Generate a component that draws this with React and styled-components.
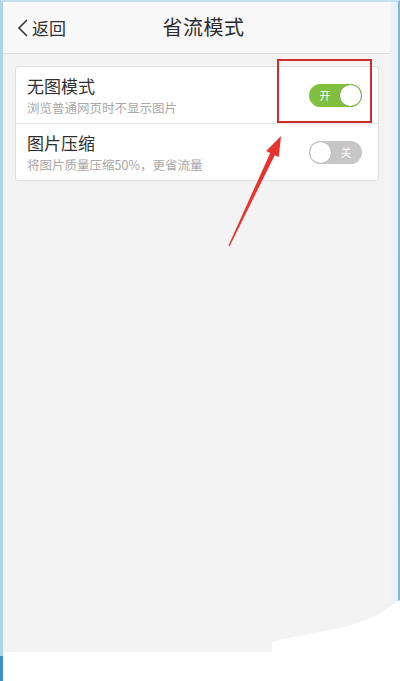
import React from "react";
import styled, { createGlobalStyle } from "styled-components";

const Global = createGlobalStyle`
  html, body { margin: 0; padding: 0; background: #ffffff; }
  body { font-family: "Noto Sans CJK SC", "Noto Sans", sans-serif; }
  * { box-sizing: border-box; }
`;

const Frame = styled.div`
  position: relative;
  width: 400px;
  height: 681px;
  display: flex;
  flex-direction: column;
  background: #ffffff;
  overflow: hidden;
`;

const Screen = styled.div`
  height: 652px;
  display: flex;
  border-top: 2px solid #c3e2f0;
  border-left: 3px solid #acd5e8;
  border-right: 2px solid #86b4ca;
`;

const Panel = styled.div`
  flex: 1;
  display: flex;
  flex-direction: column;
  background: #f3f3f3;
`;

const EdgeBand = styled.div`
  width: 8px;
  background: linear-gradient(90deg, #f1f3f4 0%, #e6f1f8 60%, #e2f0fa 100%);
`;

const Header = styled.header`
  height: 52px;
  display: grid;
  grid-template-columns: 1fr auto 1fr;
  align-items: center;
  padding: 0 0 0 14px;
  background: #f8f8f8;
  border-bottom: 1px solid #dcdcdc;
`;

const Back = styled.div`
  display: flex;
  align-items: center;
  gap: 3px;
  color: #333;
  font-size: 17px;
  justify-self: start;
`;

const Title = styled.h1`
  margin: 0 0 2px;
  font-size: 20px;
  font-weight: 400;
  color: #2a2a2a;
  letter-spacing: 0.5px;
`;

const Content = styled.main`
  padding: 12px 11px 0 12px;
`;

const Card = styled.section`
  background: #ffffff;
  border: 1px solid #e0e0e0;
  border-radius: 3px;
`;

const Row = styled.div`
  height: ${(p) => (p.$last ? "56px" : "57px")};
  display: flex;
  align-items: center;
  justify-content: space-between;
  padding: 0 16px 0 11px;
  border-bottom: ${(p) => (p.$last ? "none" : "1px solid #e6e6e6")};
`;

const RowText = styled.div`
  display: flex;
  flex-direction: column;
  margin-top: -1px;
`;

const RowTitle = styled.div`
  font-size: 17px;
  line-height: normal;
  color: #2f2f2f;
`;

const RowDesc = styled.div`
  font-size: 12.5px;
  line-height: normal;
  color: #a8a8a8;
`;

const Toggle = styled.div`
  width: 53px;
  height: 23px;
  border-radius: 12px;
  display: flex;
  flex-direction: ${(p) => (p.$on ? "row" : "row-reverse")};
  align-items: center;
  padding: 1px;
  background: ${(p) => (p.$on ? "#80bf3f" : "#c6c6c6")};
`;

const ToggleLabel = styled.span`
  flex: 1;
  text-align: center;
  font-size: 11px;
  color: #ffffff;
`;

const Knob = styled.span`
  width: 21px;
  height: 21px;
  border-radius: 50%;
  background: #ffffff;
  box-shadow: 0 0 0 0.5px rgba(0, 0, 0, 0.12);
`;

const Bottom = styled.div`
  flex: 1;
  border-left: 3px solid;
  border-image: linear-gradient(#acd5e8 0 5px, #3a90c7 5px 100%) 1;
`;

const Highlight = styled.div`
  position: absolute;
  left: 277px;
  top: 59px;
  width: 95px;
  height: 64px;
  border: 2px solid #cf2d2d;
`;

const Overlay = styled.svg`
  position: absolute;
  left: 0;
  top: 0;
  pointer-events: none;
`;

function Switch({ on }) {
  return (
    <Toggle $on={on}>
      <ToggleLabel>{on ? "开" : "关"}</ToggleLabel>
      <Knob />
    </Toggle>
  );
}

export default function App() {
  return (
    <>
      <Global />
      <Frame>
        <Screen>
          <Panel>
            <Header>
              <Back>
                <svg width="12" height="18" viewBox="0 0 12 18">
                  <path d="M10 1 L2 9 L10 17" fill="none" stroke="#333" strokeWidth="1.6" />
                </svg>
                返回
              </Back>
              <Title>省流模式</Title>
              <span />
            </Header>
            <Content>
              <Card>
                <Row>
                  <RowText>
                    <RowTitle>无图模式</RowTitle>
                    <RowDesc>浏览普通网页时不显示图片</RowDesc>
                  </RowText>
                  <Switch on />
                </Row>
                <Row $last>
                  <RowText>
                    <RowTitle>图片压缩</RowTitle>
                    <RowDesc>将图片质量压缩50%，更省流量</RowDesc>
                  </RowText>
                  <Switch on={false} />
                </Row>
              </Card>
            </Content>
          </Panel>
          <EdgeBand />
        </Screen>
        <Bottom />
        <Highlight />
        <Overlay width="400" height="681" viewBox="0 0 400 681">
          <polygon
            points="281,136 278.8,157.1 274.8,155.2 229.6,246.2 228.4,245.8 270.2,153 266.2,151.1"
            fill="#e8332f"
          />
          <path
            d="M272 653 L272 642 C290 637 310 634 330 630 C350 626 368 620 382 612 C388 608 392 604 400 600 L400 653 Z"
            fill="#ffffff"
          />
        </Overlay>
      </Frame>
    </>
  );
}
